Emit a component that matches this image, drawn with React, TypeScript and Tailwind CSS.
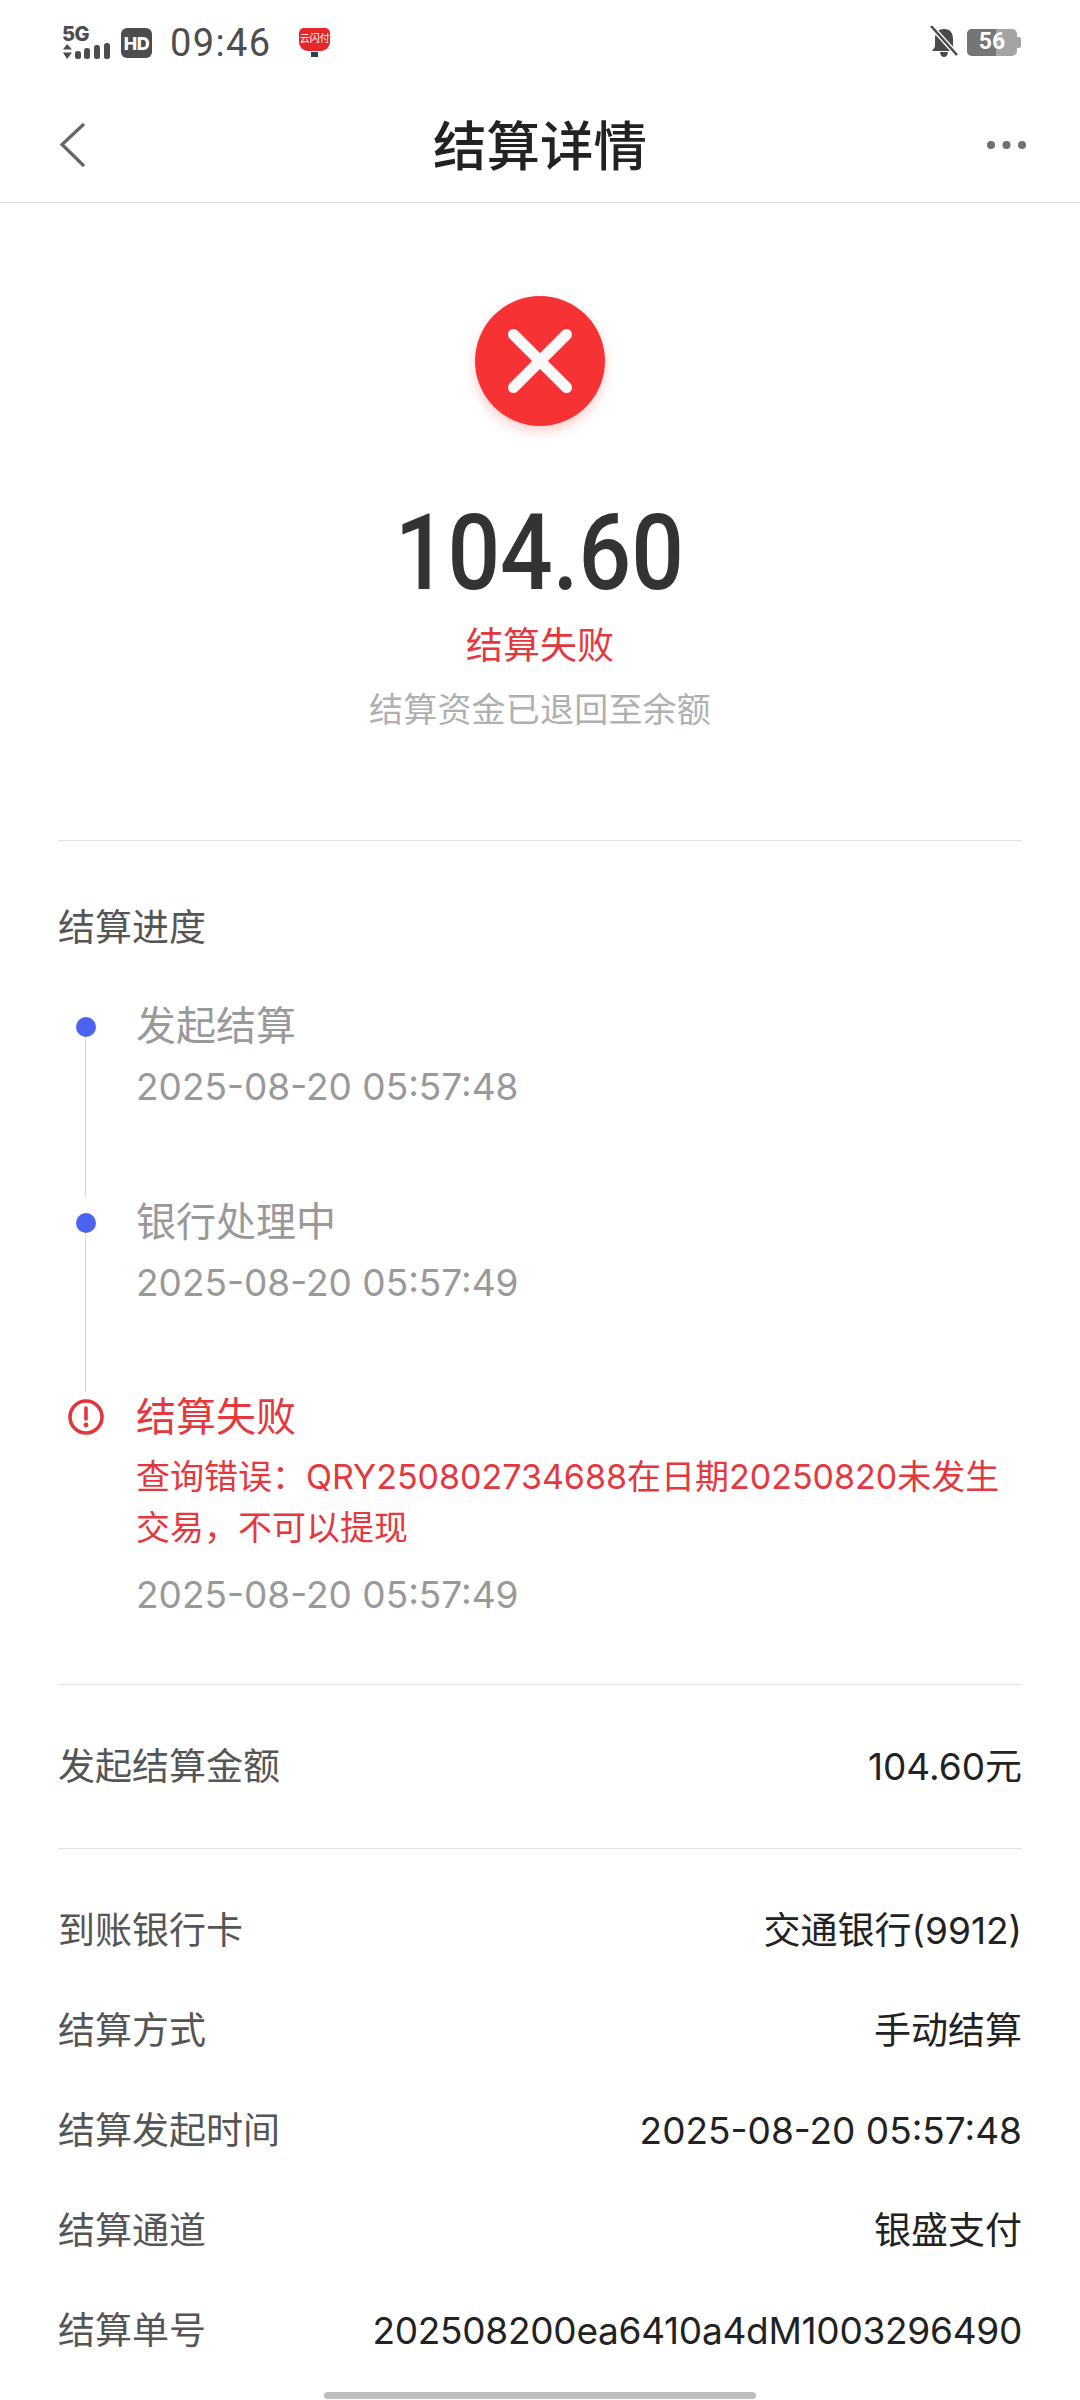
const FONT = "font-['Inter','Noto_Sans_CJK_SC',sans-serif]";

function StatusBar() {
  return (
    <div className="h-[84px] flex items-center justify-between pl-[62px] pr-[59px] pt-[2px]">
      <div className="flex items-center">
        <div className="w-[50px] h-[34px] flex flex-col text-[#4d4d4d]">
          <div className="h-[17px] text-[20px] leading-[17px] font-extrabold tracking-[-0.5px] font-['Inter',sans-serif]">5G</div>
          <svg width="50" height="17" viewBox="0 17 50 17" fill="currentColor">
            <path d="M5 18 L10 23.5 L1 23.5 Z M5 33 L1 26.5 L10 26.5 Z" />
            <rect x="13" y="25" width="6" height="8" rx="2.5" />
            <rect x="22" y="22" width="6" height="11" rx="2.5" />
            <rect x="32" y="19" width="6" height="14" rx="2.5" />
            <rect x="42" y="17" width="6" height="16" rx="2.5" />
          </svg>
        </div>
        <div className="ml-[9px] w-[31px] h-[30px] rounded-[6px] bg-[#4d4d4d] text-white flex items-center justify-center text-[18px] font-extrabold font-['Inter',sans-serif] tracking-[-0.5px]">HD</div>
        <div className="ml-[18px] text-[38px] leading-none text-[#4d4d4d] font-['Roboto',sans-serif] tracking-[1.4px]">09:46</div>
        <div className="ml-[27px] w-[32px] h-[30px] flex flex-col items-center">
          <div className="w-[31px] h-[23px] bg-[#e5262a] rounded-[5px] rounded-b-[9px] text-white text-[10px] leading-[20px] text-center font-['Noto_Sans_CJK_SC',sans-serif]">云闪付</div>
          <div className="mt-[1px] w-[7px] h-[5px] bg-[#27405f]" />
        </div>
      </div>
      <div className="flex items-center -mt-[2px]">
        <svg width="30" height="32" viewBox="0 0 30 32">
          <path d="M15 3 C8 3 6 8 6 13 L6 20 C6 22 4 23 3 25 L27 25 C26 23 24 22 24 20 L24 13 C24 8 22 3 15 3 Z M11 26 C11 29 13 31 15 31 C17 31 19 29 19 26 Z" fill="#4a4a4a" />
          <path d="M3 1 L28 29" stroke="#fff" strokeWidth="5" />
          <path d="M2 0 L28 29" stroke="#4a4a4a" strokeWidth="2.5" />
        </svg>
        <div className="ml-[8px] flex items-center">
          <div className="relative w-[50px] h-[27px] rounded-[5px] bg-[#a3a3a3] overflow-hidden">
            <div className="w-[29px] h-full bg-[#757575]" />
            <div className="absolute inset-0 flex items-center justify-center text-white text-[23px] font-bold font-['Roboto',sans-serif]">56</div>
          </div>
          <div className="w-[4px] h-[11px] bg-[#a3a3a3] rounded-r-[2px]" />
        </div>
      </div>
    </div>
  );
}

function NavBar() {
  return (
    <div className="h-[119px] border-b border-[#dedede] grid grid-cols-[1fr_auto_1fr] items-center px-[58px] pt-[4px]">
      <svg width="30" height="46" viewBox="0 0 30 46" fill="none">
        <path d="M26 2 L4 22.5 L26 44" stroke="#666" strokeWidth="3.2" />
      </svg>
      <div className="text-[53.5px] leading-none font-medium text-[#222] mt-[3px]">结算详情</div>
      <svg className="justify-self-end -mr-[6px]" width="42" height="10" viewBox="0 0 42 10" fill="#707070">
        <circle cx="5" cy="5" r="4" />
        <circle cx="20.5" cy="5" r="4" />
        <circle cx="36" cy="5" r="4" />
      </svg>
    </div>
  );
}

function Hero() {
  return (
    <div className="flex flex-col items-center pt-[93px] pb-[105px]">
      <div className="w-[130px] h-[130px] rounded-full bg-[#f73235] shadow-[0_5px_12px_rgba(247,50,53,0.25)] flex items-center justify-center">
        <svg width="64" height="64" viewBox="0 0 64 64" fill="none">
          <path d="M5.5 5.5 L58.5 58.5 M58.5 5.5 L5.5 58.5" stroke="#fafafa" strokeWidth="11" strokeLinecap="round" />
        </svg>
      </div>
      <div className="mt-[67px] h-[120px] text-[106px] leading-[120px] font-medium text-[#333] font-['Roboto',sans-serif] scale-x-[0.875] -translate-x-[1px]">104.60</div>
      <div className="mt-[8px] h-[50px] text-[37px] leading-[50px] text-[#e5383e]">结算失败</div>
      <div className="mt-[14px] h-[50px] text-[34px] leading-[50px] text-[#b0b0b0] tracking-[0.2px]">结算资金已退回至余额</div>
    </div>
  );
}

function Step({ title, time, heightClass }: { title: string; time: string; heightClass: string }) {
  return (
    <div className={`flex ${heightClass}`}>
      <div className="w-[56px] flex flex-col items-center">
        <div className="mt-[16px] w-[20px] h-[20px] shrink-0 rounded-full bg-[#4c62f0]" />
        <div className="flex-1 w-px self-start ml-[27px] bg-[#d9d9d9]" />
      </div>
      <div className="ml-[22px]">
        <div className="h-[50px] text-[40px] leading-[50px] text-[#999]">{title}</div>
        <div className="mt-[11px] h-[50px] text-[37px] leading-[50px] text-[#999]">{time}</div>
      </div>
    </div>
  );
}

function Progress() {
  return (
    <div className="pt-[62px] pb-[64px] border-t border-b border-[#e3e3e3]">
      <div className="h-[50px] text-[37px] leading-[50px] text-[#555]">结算进度</div>
      <div className="mt-[48px]">
        <Step title="发起结算" time="2025-08-20 05:57:48" heightClass="h-[196px]" />
        <Step title="银行处理中" time="2025-08-20 05:57:49" heightClass="h-[195px]" />
        <div className="flex">
          <div className="w-[56px] flex flex-col items-center">
            <svg className="mt-[7px]" width="36" height="36" viewBox="0 0 36 36" fill="none">
              <circle cx="18" cy="18" r="16" stroke="#e0363c" strokeWidth="3.6" />
              <path d="M18 9 L18 20" stroke="#e0363c" strokeWidth="3.6" strokeLinecap="round" />
              <circle cx="18" cy="26" r="2.4" fill="#e0363c" />
            </svg>
          </div>
          <div className="ml-[22px] flex-1">
            <div className="h-[50px] text-[40px] leading-[50px] text-[#e5383e]">结算失败</div>
            <div className="mt-[9px] text-[34px] leading-[51px] text-[#e5383e]">{"查询错误\uFF1AQRY250802734688在日期20250820未发生交易\uFF0C不可以提现"}</div>
            <div className="mt-[17px] h-[50px] text-[37px] leading-[50px] text-[#999]">2025-08-20 05:57:49</div>
          </div>
        </div>
      </div>
    </div>
  );
}

function Row({ label, value, valueClass = "" }: { label: string; value: string; valueClass?: string }) {
  return (
    <div className="h-[100px] flex items-center justify-between text-[37px]">
      <div className="text-[#555]">{label}</div>
      <div className={`text-[#222] ${valueClass}`}>{value}</div>
    </div>
  );
}

export default function App() {
  return (
    <div className={`w-[1080px] h-[2400px] bg-white overflow-hidden relative ${FONT}`}>
      <StatusBar />
      <NavBar />
      <div className="px-[58px]">
        <Hero />
        <Progress />
        <div className="h-[164px] flex flex-col justify-center border-b border-[#e3e3e3]">
          <Row label="发起结算金额" value="104.60元" />
        </div>
        <div className="pt-[32px]">
          <Row label="到账银行卡" value="交通银行(9912)" />
          <Row label="结算方式" value="手动结算" />
          <Row label="结算发起时间" value="2025-08-20 05:57:48" />
          <Row label="结算通道" value="银盛支付" />
          <Row label="结算单号" value="202508200ea6410a4dM1003296490" valueClass="tracking-[-0.28px]" />
        </div>
      </div>
      <div className="absolute bottom-[1px] left-[324px] w-[432px] h-[7px] rounded-full bg-[#bdbdbd]" />
    </div>
  );
}
